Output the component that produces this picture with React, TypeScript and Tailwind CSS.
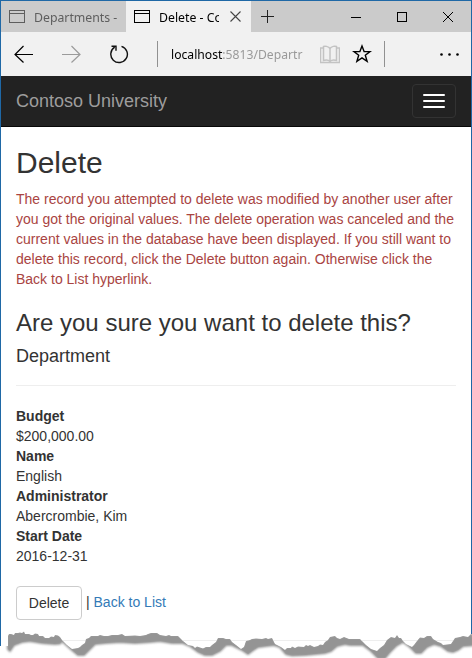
const topEdge =
  "8,636 9,634 11,634 14,635 15,633 18,633 20,632.5 22,633 24,631.5 25,634 29,634 31,635 33,635 35,633.5 38,634 39,636 43,636 45,638 49,638 51,636.5 54,637 55,635 58,635.5 60,637 62,640 67,645 72,649 78,648 80,647 82,645 85,643 86,639 89,638 91,636 98,636 100,635 104,636 108,636 112,635 118,635 120,634.5 122,634 125,636 135,635.5 140,636 143,635.5 146,635 148,634 151,633 157,633 160,635 166,636 169,635 171,636 178,636 180,638 183,641 188,645 193,646 195,648 197,646.5 200,647.5 203,648.5 206,647 210,647 212,645 216,642 218,638 223,638 226,639 230,639 232,642 236,645 241,649 244,647 246,641 250,640 252,639 256,638.5 262,639 266,638 268,639 272,638 275,644 281,647 285,650 287,648 291,648 292,646.5 295,648 298,646.5 304,647 306,645 308,646 310,645 314,647 318,646 320,644.5 323,645 325,642 328,640 330,637 335,636 337,638 340,639 344,637 349,639 360,639 363,642 366,645 371,649 377,651 380,648 384,645 387,640 391,637 395,638 397,635 399,638 401,638 403,641 406,644 412,647 414,645 417,641 420,637.5 424,638 427,636 431,636 433,639 438,642 441,643 443,645 451,644 453,641 455,638 460,637 463,636 468,637 471,634";

const bottomEdge =
  "476,645 463,646 458,650 453,652 448,651 441,646 434,644 427,647 421,653 416,653 410,647 403,642 396,646 390,652 385,658 378,658 371,651 363,645 350,645 345,644 337,646 331,651 325,653 305,655 292,655.5 286,654 280,647 274,645 258,647 252,651 248,654 242,650 232,645 226,645 220,651 212,655 205,655 198,652 190,646 183,643 178,643 172,643 160,641 150,642 135,643 120,642 105,643 95,644 90,649 84,655 78,655 72,650 62,641 60,643.5 55,644 42,643 30,641 22,642 14,645 10,651 8,649";

function TornEdge() {
  return (
    <svg className="absolute left-0 top-[628px] h-[30px] w-[472px]" viewBox="0 628 472 30" aria-hidden="true">
      <defs>
        <clipPath id="below">
          <polygon points={`${topEdge} 472,634 472,658 0,658 0,646 8,646`} />
        </clipPath>
        <filter id="soft" x="-5%" y="-30%" width="110%" height="160%">
          <feGaussianBlur stdDeviation="1.1" />
        </filter>
      </defs>
      <polygon points={`${topEdge} 480,634 480,660 0,660 0,646 8,646`} fill="#fff" shapeRendering="crispEdges" />
      <g clipPath="url(#below)">
        <polygon points={`${topEdge} ${bottomEdge}`} fill="#949494" stroke="#949494" strokeWidth="2" filter="url(#soft)" />
        <polygon points={`${topEdge} ${bottomEdge}`} fill="#949494" fillOpacity=".5" />
      </g>
    </svg>
  );
}

function PageIcon({ color }: { color: string }) {
  return (
    <svg className="h-[13px] w-4 shrink-0" viewBox="0 0 16 13" fill="none" stroke={color} shapeRendering="crispEdges">
      <path d="M.5.5h15v12H.5zM.5 3.5h15" />
    </svg>
  );
}

function TabBar() {
  return (
    <div className="flex h-[31px] bg-[#cbcbcb] font-['Noto_Sans',sans-serif] text-[13px]">
      <div className="flex w-[125px] items-center pl-2 text-[#5e5e5e]">
        <PageIcon color="#5e5e5e" />
        <span className="ml-[9px] w-[84px] overflow-hidden whitespace-nowrap">
          <span className="inline-block origin-left scale-x-[.945]">Departments -</span>
        </span>
      </div>
      <div className="flex w-[125px] items-center bg-[#f1f1f1] pl-2 text-black">
        <PageIcon color="#000" />
        <span className="ml-[9px] w-[60px] overflow-hidden whitespace-nowrap">
          <span className="inline-block origin-left scale-x-[.945]">Delete - Co</span>
        </span>
        <svg className="ml-[11px] size-[11px]" viewBox="0 0 11 11" stroke="#444" strokeWidth="1.1">
          <path d="M.5.5l10 10M10.5.5l-10 10" />
        </svg>
      </div>
      <svg className="ml-[10px] mt-[9px] size-[13px]" viewBox="0 0 13 13" stroke="#222" shapeRendering="crispEdges">
        <path d="M6.5 0v13M0 6.5h13" />
      </svg>
      <div className="ml-auto mr-[18px] flex items-center">
        <svg className="h-[10px] w-[10px]" viewBox="0 0 10 10" stroke="#000" shapeRendering="crispEdges">
          <path d="M0 5.5h10" />
        </svg>
        <svg className="ml-[36px] h-[10px] w-[10px]" viewBox="0 0 10 10" fill="none" stroke="#000" shapeRendering="crispEdges">
          <path d="M.5.5h9v9h-9z" />
        </svg>
        <svg className="ml-[36px] h-[10px] w-[10px]" viewBox="0 0 10 10" stroke="#000">
          <path d="M0 0l10 10M10 0L0 10" />
        </svg>
      </div>
    </div>
  );
}

function AddressBar() {
  return (
    <div className="flex h-11 items-center bg-[#f1f1f1] font-['Noto_Sans',sans-serif]">
      <svg className="ml-[13px] h-[18px] w-[19px]" viewBox="0 0 19 18" fill="none" stroke="#000" strokeWidth="1.2">
        <path d="M19 9.5H1M9.5 1L1 9.5l8.5 8" />
      </svg>
      <svg className="ml-[29px] h-[18px] w-[19px]" viewBox="0 0 19 18" fill="none" stroke="#9b9b9b" strokeWidth="1.2">
        <path d="M0 9.500h18M9.500 1L18 9.500l-8.500 8" />
      </svg>
      <svg className="ml-[28px] h-[20px] w-[20px]" viewBox="0 0 20 20" fill="none" stroke="#111" strokeWidth="1.4">
        <path d="M12.500 2.300A8.300 8.300 0 1 1 5.700 3.200" />
        <path d="M2.500 2.200h4.500v4.500" />
      </svg>
      <div className="ml-[28px] h-[26px] w-px bg-[#919191]" />
      <div className="ml-[13px] w-[134px] whitespace-nowrap text-[13px] leading-5 text-[#999]">
        <span className="inline-block origin-left scale-x-[.935]">
          <span className="text-black">localhost</span>:5813/Departr
        </span>
      </div>
      <svg className="ml-[15px] h-[19px] w-[20px]" viewBox="0 0 20 19" fill="none" stroke="#c3c3c3" strokeWidth="1.5">
        <path d="M10 3.500C8.500 1 4.500 1 3.500 1.500v14c2-.5 5-.5 6.500 1 1.500-1.500 4.500-1.500 6.500-1v-14C15 1 11.500 1 10 3.500zM10 3v14" />
        <path d="M3.500 3h-3v14.500h19V3h-3" />
      </svg>
      <svg className="ml-[12px] size-5" viewBox="0 0 20 20" fill="none" stroke="#000" strokeWidth="1.4">
        <path d="M10 2l2.100 5.600h6l-4.800 3.700 1.800 6.100L10 13.900l-5.100 3.500 1.800-6.100L1.900 7.600h6z" />
      </svg>
      <div className="ml-[12px] h-[26px] w-px bg-[#919191]" />
      <svg className="ml-auto mr-[12px] h-[3px] w-[19px]" viewBox="0 0 19 3">
        <circle cx="1.500" cy="1.500" r="1.300" />
        <circle cx="9.500" cy="1.500" r="1.300" />
        <circle cx="17.500" cy="1.500" r="1.300" />
      </svg>
    </div>
  );
}

const fields = [
  ["Budget", "$200,000.00"],
  ["Name", "English"],
  ["Administrator", "Abercrombie, Kim"],
  ["Start Date", "2016-12-31"],
];

export default function App() {
  return (
    <div className="relative h-[658px] w-[472px] overflow-hidden bg-white font-['Liberation_Sans',Arial,sans-serif] text-sm leading-5 text-[#333]">
      <div className="h-[658px] border-x border-t border-[#1f68a6]">
        <TabBar />
        <AddressBar />
        <nav className="flex h-[51px] items-center justify-between border-b border-[#080808] bg-[#222] px-[15px]">
          <span className="text-lg text-[#9d9d9d]">Contoso University</span>
          <button className="flex h-[34px] w-11 flex-col items-center justify-center gap-1 rounded border border-[#333]" aria-label="Menu">
            <span className="h-0.5 w-[22px] rounded-[1px] bg-white" />
            <span className="h-0.5 w-[22px] rounded-[1px] bg-white" />
            <span className="h-0.5 w-[22px] rounded-[1px] bg-white" />
          </button>
        </nav>
        <main className="px-[15px] pt-[19px]">
          <h2 className="mb-[10px] text-[30px] leading-[33px]">Delete</h2>
          <p className="mr-[-8px] whitespace-nowrap text-[#a94442]">
            The record you attempted to delete was modified by another user after
            <br />
            you got the original values. The delete operation was canceled and the
            <br />
            current values in the database have been displayed. If you still want to
            <br />
            delete this record, click the Delete button again. Otherwise click the
            <br />
            Back to List hyperlink.
          </p>
          <h3 className="mt-[21px] text-2xl leading-[26px]">Are you sure you want to delete this?</h3>
          <h4 className="mt-[10px] text-lg leading-5">Department</h4>
          <hr className="mt-[19px] border-[#eee]" />
          <dl className="mt-5">
            {fields.map(([label, value]) => (
              <div key={label}>
                <dt className="font-bold">{label}</dt>
                <dd>{value}</dd>
              </div>
            ))}
          </dl>
          <div className="mt-5 flex items-start">
            <button className="h-[34px] w-[66px] rounded border border-[#ccc] bg-white">Delete</button>
            <span className="ml-1 mt-1.5 whitespace-pre">
              | <a className="text-[#337ab7]">Back to List</a>
            </span>
          </div>
          <hr className="mt-5 border-[#eee]" />
        </main>
      </div>
      <TornEdge />
    </div>
  );
}
